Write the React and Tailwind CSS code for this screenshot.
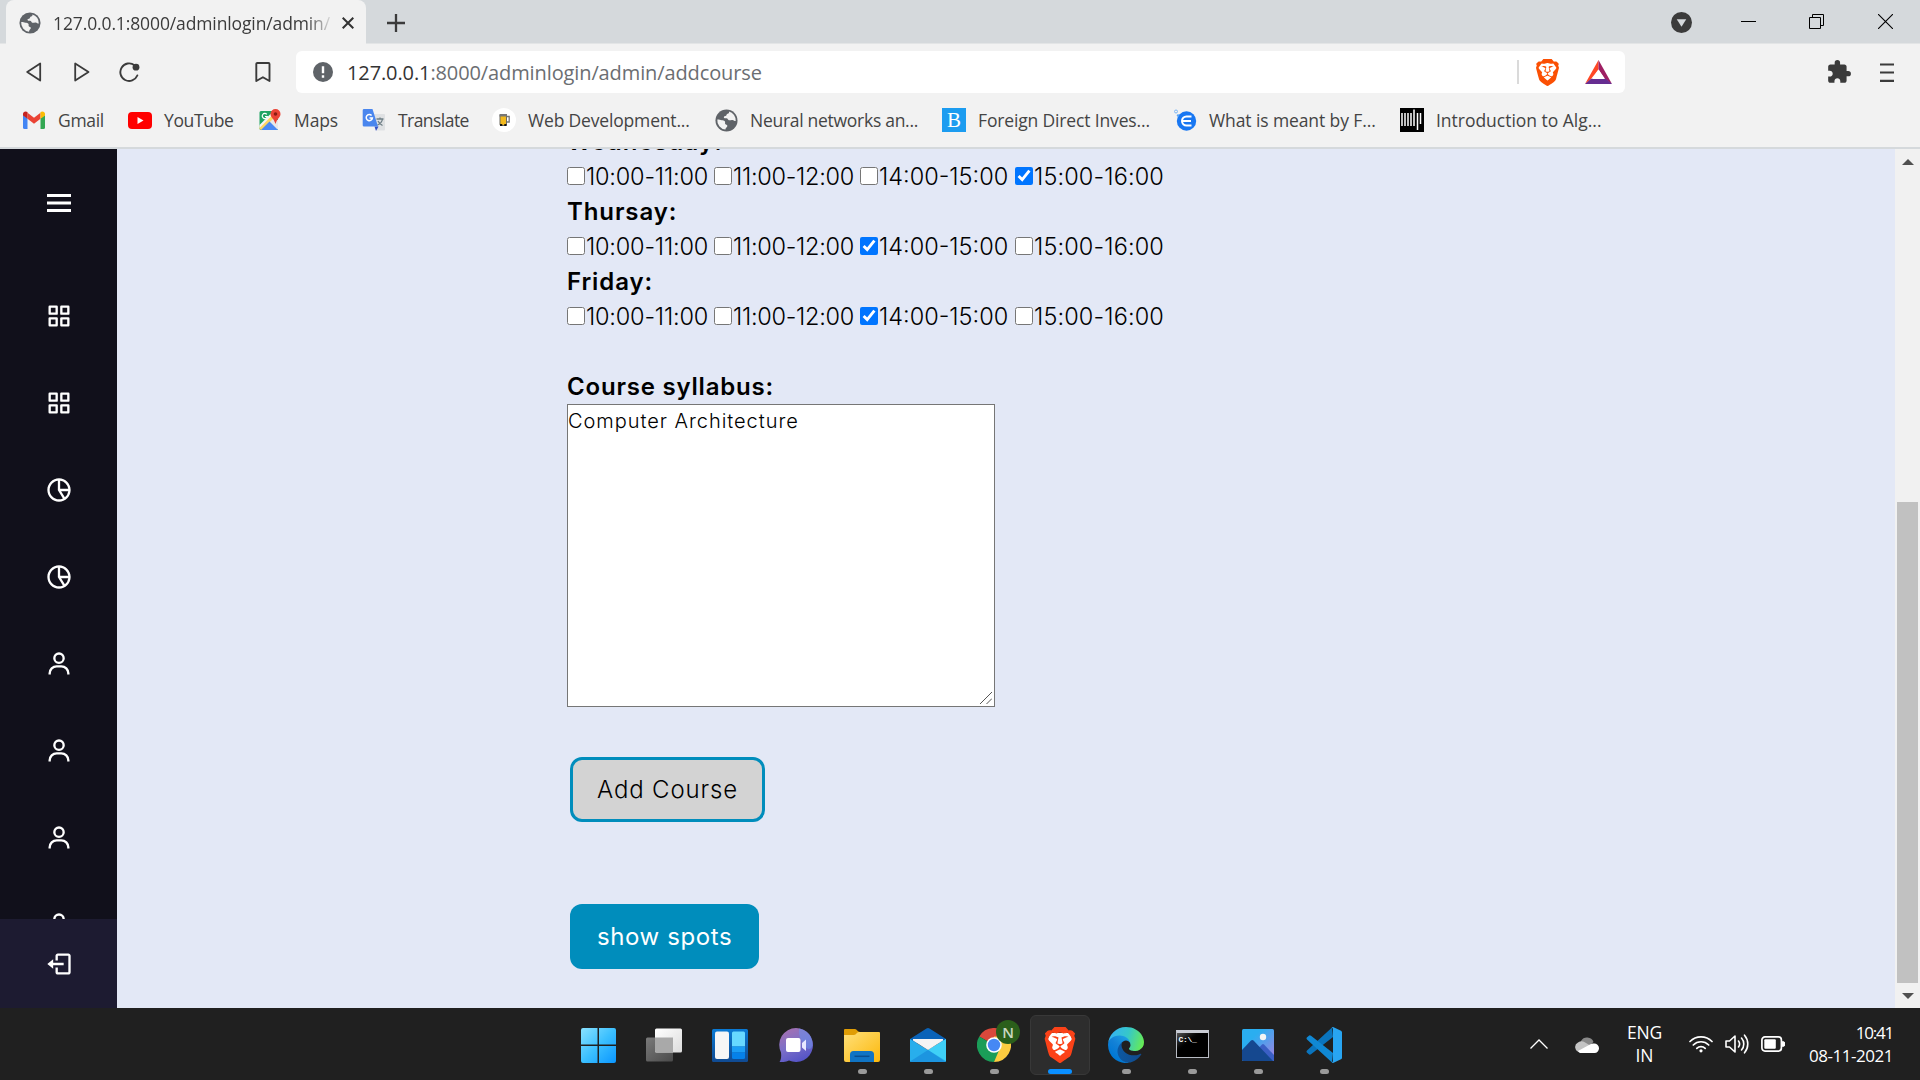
import React from "react";
import { BiMenu, BiGridAlt, BiPieChartAlt2, BiUser, BiLogOut } from "react-icons/bi";
import { SiBrave } from "react-icons/si";
import { MdExtension } from "react-icons/md";

function Globe({ className }) {
  return (
    <svg viewBox="0 0 24 24" className={className}>
      <circle cx="12" cy="12" r="11.5" fill="#5f6368" />
      <path
        d="M14.500 2.600c.6 1.200-.2 2-1.300 2.400-1.200.4-.9 1.300-1.700 2-.8.6-2.300.4-2.300 1.500 0 1.200 1.500 1 2.800 1.100 1.500.1 1.300 1.700 2.500 2.100 1.300.4 2.300-.5 3.700-.2 1.600.4 2.200 1.200 3.400 1.100A9.700 9.700 0 0 0 14.500 2.600zM2.400 11c1.800-.1 3.100.6 4.600.7 1.300.1 2.400 0 3.200 1 .8 1.100-.1 1.900.5 2.900.6.9 2.100.7 2.200 1.900.1 1.500-2 1.800-2 4A9.700 9.700 0 0 1 2.400 11z"
        fill="#f2f2f2"
      />
    </svg>
  );
}

function GmailIcon() {
  return (
    <svg viewBox="0 0 24 18" className="h-[18px] w-6">
      <path d="M1 16.500V4l4.500 3.500V18H2.500A1.500 1.500 0 0 1 1 16.500z" fill="#4285f4" />
      <path d="M23 16.500V4l-4.500 3.500V18h3a1.500 1.500 0 0 0 1.500-1.500z" fill="#34a853" />
      <path d="M5.500 1.800 12 6.700l6.500-4.900v6L12 12.700 5.500 7.800z" fill="#ea4335" />
      <path d="M1 4V3C1 .6 3.600-.4 5.500 1.100v6.700L1 4.400z" fill="#c5221f" />
      <path d="M23 4V3c0-2.400-2.600-3.400-4.500-1.900v6.700L23 4.400z" fill="#fbbc04" />
    </svg>
  );
}

function YouTubeIcon() {
  return (
    <svg viewBox="0 0 24 17" className="h-[17px] w-6">
      <rect width="24" height="17" rx="4" fill="#f00" />
      <path d="M9.500 5v7l6-3.500z" fill="#fff" />
    </svg>
  );
}

function MapsIcon() {
  return (
    <svg viewBox="0 0 24 24" className="size-6">
      <path d="M3 3h17v19H3a1.500 1.500 0 0 1-1.500-1.500v-16A1.500 1.500 0 0 1 3 3z" fill="#1fa463" />
      <path d="M20 12v8.500a1.500 1.500 0 0 1-1.500 1.500l-8-8 4-4z" fill="#e8e8e8" />
      <path d="M1.500 18.500 14 6l3 3L3.500 22.200 1.500 21z" fill="#fdd663" />
      <path d="M1.500 17 13 5.500l1.500 1.500-13 13z" fill="#f5f5f5" />
      <path d="M3 22 11.500 13.500 20 22z" fill="#4a89f3" />
      <path d="M8.800 6.300a2.600 2.600 0 1 0 .6 2.200H7" fill="none" stroke="#fff" strokeWidth="1.200" />
      <path d="M17.500 1a5 5 0 0 1 5 5c0 3.500-3.500 4.500-5 10-1.500-5.500-5-6.500-5-10a5 5 0 0 1 5-5z" fill="#ea4335" />
      <circle cx="17.500" cy="6" r="1.800" fill="#8c1c13" />
    </svg>
  );
}

function TranslateIcon() {
  return (
    <svg viewBox="0 0 24 24" className="size-6">
      <path d="M10 6h12a1 1 0 0 1 1 1v14.500a1 1 0 0 1-1 1h-7z" fill="#dfe1e3" />
      <path d="M14.500 11h7M18 9.500V11m2.500 0c-.5 3-2.500 5-5 6m.5-4c1 2 2.500 3.500 4.500 4.500" stroke="#6f7f86" strokeWidth="1.300" fill="none" />
      <path d="M12.500 18.500h4L14 23z" fill="#3551c4" />
      <path d="M2 1h8.500l5.500 17.500H2a1.300 1.300 0 0 1-1.300-1.300V2.300A1.300 1.300 0 0 1 2 1z" fill="#4a86ee" />
      <path d="M9.600 7.500a3.100 3.100 0 1 0 .8 2.400H7.500" stroke="#fff" strokeWidth="1.500" fill="none" />
    </svg>
  );
}

function BeerIcon() {
  return (
    <svg viewBox="0 0 24 24" className="size-6">
      <circle cx="12" cy="12" r="12" fill="#fff" />
      <path d="M14.500 8.500h2.700v5.500h-2.700" stroke="#777" strokeWidth="1.300" fill="none" />
      <rect x="8" y="6.500" width="6.500" height="11" rx="1" fill="#f2b91d" stroke="#6d6a60" strokeWidth="1" />
      <path d="M7.500 6h7.500v2.500H7.500z" fill="#777" />
      <path d="M8 16h2.300v2H8zM12.300 16h2.300v2h-2.300z" fill="#111" />
    </svg>
  );
}

function BIcon() {
  return (
    <span className="flex size-6 items-center justify-center bg-[#1c9cf0] font-['Liberation_Serif',serif] text-[21px] leading-6 text-white">B</span>
  );
}

function EIcon() {
  return (
    <svg viewBox="0 0 24 24" className="size-6">
      <circle cx="13.500" cy="13" r="9.700" fill="#1877f2" />
      <circle cx="3" cy="3.500" r="1.500" fill="none" stroke="#7db7f5" />
      <circle cx="5" cy="7.500" r="1.200" fill="#58a3f5" />
      <path d="M18.500 8.500h-5a4.500 4.500 0 0 0 0 9h5M9.500 13h8.500" stroke="#fff" strokeWidth="2" fill="none" />
    </svg>
  );
}

function MitIcon() {
  return (
    <svg viewBox="0 0 24 24" className="size-6">
      <path d="M0 0h24v24H0z" fill="#000" />
      <path d="M2 5v13M5 5v13M8 5v13M11 5v13M14 1.500v16.500M17.500 5v17M20.500 5v11" stroke="#fff" strokeWidth="1.500" />
    </svg>
  );
}

const bookmarks = [
  { label: "Gmail", icon: <GmailIcon />, box: "w-[106px]", track: "tracking-[-0.3px]" },
  { label: "YouTube", icon: <YouTubeIcon />, box: "w-[130px]", track: "tracking-[-0.35px]" },
  { label: "Maps", icon: <MapsIcon />, box: "w-[104px]", track: "tracking-[-0.1px]" },
  { label: "Translate", icon: <TranslateIcon />, box: "w-[130px]", track: "tracking-[-0.55px]" },
  { label: "Web Development...", icon: <BeerIcon />, box: "w-[222px]", track: "tracking-[-0.17px]" },
  { label: "Neural networks an...", icon: <Globe className="size-[23px]" />, box: "w-[228px]", track: "tracking-[-0.28px]" },
  { label: "Foreign Direct Inves...", icon: <BIcon />, box: "w-[231px]", track: "tracking-[-0.15px]" },
  { label: "What is meant by F...", icon: <EIcon />, box: "w-[227px]", track: "tracking-[-0.1px]" },
  { label: "Introduction to Alg...", icon: <MitIcon />, box: "w-[220px]", track: "tracking-[-0.02px]" },
];

function TabStrip() {
  return (
    <div className="flex h-11 items-start border-b border-[#e3e5e6] bg-[#d5d9dc]">
      <div className="ml-1.5 flex h-11 w-[360px] items-center rounded-t-lg bg-[#f2f2f2] pt-0.5 pr-3 pb-px pl-[13px]">
        <Globe className="size-[22px]" />
        <div className="ml-3 w-[281px] overflow-hidden mask-r-from-90% mask-r-to-100% text-[17.5px] leading-6 font-medium tracking-[-0.12px] whitespace-nowrap text-[#3b3b3b]">
          127.0.0.1:8000/adminlogin/admin/
        </div>
        <svg viewBox="0 0 12 12" className="ml-2 size-3">
          <path d="M.7.700 11.300 11.300M11.300.7.700 11.300" stroke="#333" strokeWidth="2" />
        </svg>
      </div>
      <svg viewBox="0 0 18 18" className="mt-[14px] ml-[21px] size-[18px]">
        <path d="M9 0v18M0 9h18" stroke="#3b3b3b" strokeWidth="2.300" />
      </svg>
      <div className="mr-[27px] ml-auto flex h-11 items-start">
        <svg viewBox="0 0 22 22" className="mt-3 mr-[49px] size-[21px]">
          <circle cx="11" cy="11" r="11" fill="#3b3b3b" />
          <path d="M6 7.500h10L11 15.500z" fill="#d5d9dc" />
        </svg>
        <svg viewBox="0 0 15 15" className="mt-[14px] mr-[53px] size-[15px]"><path d="M0 7.500h15" stroke="#000" /></svg>
        <svg viewBox="0 0 15 15" className="mt-[14px] mr-[54px] size-[15px]" fill="none" stroke="#000">
          <path d="M3.500 3V.500h11v11H12M.500 3.500h11v11H.500z" />
        </svg>
        <svg viewBox="0 0 15 15" className="mt-[14px] size-[15px]"><path d="M0 0l15 15M15 0 0 15" stroke="#000" strokeWidth="1.100" /></svg>
      </div>
    </div>
  );
}

function Toolbar() {
  return (
    <div className="flex h-[56px] items-center">
      <svg viewBox="0 0 16 20" className="ml-[25.5px] h-5 w-4" fill="none" stroke="#3b3b3b" strokeWidth="1.800" strokeLinejoin="round">
        <path d="M14.200 1.500v17L1.200 10z" />
      </svg>
      <svg viewBox="0 0 16 20" className="ml-8 h-5 w-4" fill="none" stroke="#3b3b3b" strokeWidth="1.800" strokeLinejoin="round">
        <path d="M1.200 1.500v17L14.500 10z" />
      </svg>
      <svg viewBox="0 0 21 20" className="ml-[29.5px] h-5 w-[21px]">
        <path d="M18.300 13.500A8.800 8.800 0 1 1 15.500 3.200" fill="none" stroke="#3b3b3b" strokeWidth="1.900" strokeLinecap="round" />
        <circle cx="17" cy="5.200" r="3.400" fill="#3b3b3b" />
      </svg>
      <svg viewBox="0 0 16 20" className="ml-[115px] h-5 w-4" fill="none" stroke="#3b3b3b" strokeWidth="1.900" strokeLinejoin="round">
        <path d="M1.300 2A1 1 0 0 1 2.300 1h11.200a1 1 0 0 1 1 1v17l-6.600-3.800L1.300 19z" />
      </svg>
      <div className="ml-[25px] flex h-[42px] w-[1329px] items-center rounded-md bg-white">
        <svg viewBox="0 0 20 20" className="ml-[17px] size-5">
          <circle cx="10" cy="10" r="10" fill="#5f6368" />
          <path d="M10 4.300v7M10 13.300v2.400" stroke="#fff" strokeWidth="2.400" />
        </svg>
        <div className="ml-[14px] pt-px text-[20px] leading-[30px] tracking-[-0.11px] whitespace-nowrap text-[#6b6e72]">
          <span className="text-[#333]">127.0.0.1</span>:8000/adminlogin/admin/addcourse
        </div>
        <div className="ml-auto h-6 w-0.5 bg-[#dadada]" />
        <SiBrave className="ml-[15px] h-[27px] w-[27px] text-[#fb5004]" />
        <svg viewBox="0 0 27 24" className="mr-[13px] ml-[24px] h-6 w-[27px]">
          <path d="M13.500 0v9.500L6 19 0 24z" fill="#ff4724" />
          <path d="M13.500 0 27 24l-6.500-4.500-7-10z" fill="#9e1f63" />
          <path d="M0 24 6 18.800h15L27 24z" fill="#662d91" />
          <path d="M13.500 9.300 19.500 19h-12z" fill="#fff" />
        </svg>
      </div>
      <MdExtension className="ml-[201px] size-[26px] text-[#3b3b3b]" />
      <svg viewBox="0 0 14 19" className="ml-[28px] h-[19px] w-[14px]">
        <path d="M0 1.500h14M0 9.500h14M0 17.800h14" stroke="#3b3b3b" strokeWidth="2.200" />
      </svg>
    </div>
  );
}

function BookmarksBar() {
  return (
    <div className="flex h-[49px] items-start border-b-2 border-[#d5d9dc] pl-[22px]">
      {bookmarks.map((b) => (
        <div key={b.label} className={"flex h-10 shrink-0 items-center gap-3 " + b.box}>
          <span className="flex w-6 shrink-0 justify-center">{b.icon}</span>
          <span className={"pb-px text-[17.5px] leading-6 whitespace-nowrap text-[#444] " + b.track}>{b.label}</span>
        </div>
      ))}
    </div>
  );
}

function Sidebar() {
  const items = [BiGridAlt, BiGridAlt, BiPieChartAlt2, BiPieChartAlt2, BiUser, BiUser, BiUser, BiUser];
  return (
    <aside className="flex w-[117px] shrink-0 flex-col bg-[#11101b] text-white">
      <div className="flex h-[108px] shrink-0 items-center justify-center"><BiMenu className="size-9" /></div>
      <nav className="flex min-h-0 flex-1 flex-col overflow-hidden pt-[15px]">
        {items.map((Icon, i) => (
          <div key={i} className="flex h-[87px] shrink-0 items-center justify-center"><Icon className="size-7" /></div>
        ))}
      </nav>
      <div className="flex h-[89px] shrink-0 items-center justify-center bg-[#1d1b31]"><BiLogOut className="size-7" /></div>
    </aside>
  );
}

const slots = [
  { time: "10:00-11:00", box: "w-[147px]", track: "tracking-[-0.2px]" },
  { time: "11:00-12:00", box: "w-[146px]", track: "tracking-[-0.28px]" },
  { time: "14:00-15:00", box: "w-[155px]", track: "" },
  { time: "15:00-16:00", box: "w-[155px]", track: "tracking-[0.13px]" },
];
const days = [
  { name: "Wednesday:", picked: 3, track: "tracking-[1.14px]" },
  { name: "Thursay:", picked: 2, track: "tracking-[0.9px]" },
  { name: "Friday:", picked: 2, track: "tracking-[0.9px]" },
];

function Day({ day }) {
  return (
    <div>
      <div className={"w-fit text-[24px] leading-[35px] font-semibold " + day.track}>{day.name}</div>
      <div className="flex h-[35px] items-center">
        {slots.map((s, i) => (
          <label key={s.time} className={"flex shrink-0 items-center " + s.box}>
            <input type="checkbox" defaultChecked={i === day.picked} className="mb-0.5 size-[18px] shrink-0" />
            <span className={"ml-px text-[23.5px] leading-[35px] font-light whitespace-nowrap " + s.track}>{s.time}</span>
          </label>
        ))}
      </div>
    </div>
  );
}

function CourseForm() {
  return (
    <main className="flex-1 overflow-hidden bg-[#e3e8f6] pl-[450px] font-[Inter,sans-serif] text-black">
      <div className="-mt-[25px]">
        {days.map((d) => (<Day key={d.name} day={d} />))}
      </div>
      <div className="mt-[35px] w-fit text-[24px] leading-[35px] font-semibold tracking-[0.8px]">Course syllabus:</div>
      <div className="relative h-[303px] w-[428px] border border-[#767676] bg-white pt-px">
        <span className="text-[20px] leading-[30px] font-light tracking-[0.96px]">Computer Architecture</span>
        <svg viewBox="0 0 12 12" className="absolute right-0.5 bottom-0.5 size-3"><path d="M0 12 12 0M6.500 12 12 6.500" stroke="#555" /></svg>
      </div>
      <button className="mt-[50px] ml-[3px] flex h-[65px] w-[195px] items-center rounded-[12px] border-3 border-[#008dbc] bg-[#d3d3d3] pl-6 text-[24px] font-light tracking-[0.85px]">
        Add Course
      </button>
      <button className="mt-[82px] ml-[3px] flex h-[65px] w-[189px] items-center rounded-[12px] bg-[#008dbc] pl-[27px] text-[24px] tracking-[0.6px] text-white">
        show spots
      </button>
    </main>
  );
}

function Scrollbar() {
  return (
    <div className="flex w-[25px] shrink-0 flex-col items-center bg-[#f1f1f1]">
      <svg viewBox="0 0 12 6" className="mt-[10px] h-1.5 w-3"><path d="M0 6 6 0l6 6z" fill="#505050" /></svg>
      <div className="mt-[337px] h-[481px] w-[21px] bg-[#c1c1c1]" />
      <svg viewBox="0 0 12 6" className="mt-[10px] h-1.5 w-3"><path d="M0 0 6 6l6-6z" fill="#505050" /></svg>
    </div>
  );
}

function StartIcon() {
  return (
    <svg viewBox="0 0 35 35" className="size-[35px]">
      <defs><linearGradient id="st" x1="0" y1="0" x2="1" y2="1"><stop offset="0" stopColor="#8ae2ff" /><stop offset=".5" stopColor="#3cc0ff" /><stop offset="1" stopColor="#0a96ff" /></linearGradient></defs>
      <path d="M2 0h14.500v16.500H0V2a2 2 0 0 1 2-2zM18 0h15a2 2 0 0 1 2 2v14.500H18zM0 18h16.500v17H2a2 2 0 0 1-2-2zM18 18h17v15a2 2 0 0 1-2 2H18z" fill="url(#st)" />
    </svg>
  );
}

function TaskViewIcon() {
  return (
    <svg viewBox="0 0 36 34" className="h-[34px] w-9">
      <defs>
        <linearGradient id="tv" x1="0" y1="0" x2="1" y2="1"><stop offset="0" stopColor="#fff" /><stop offset="1" stopColor="#dcdcdc" /></linearGradient>
        <linearGradient id="tw" x1="0" y1="0" x2="1" y2="1"><stop offset="0" stopColor="#7a7a7a" /><stop offset="1" stopColor="#4a4a4a" /></linearGradient>
      </defs>
      <rect x="0" y="9.500" width="27" height="24" rx="1.500" fill="url(#tw)" />
      <rect x="9" y=".5" width="27" height="24" rx="1.500" fill="url(#tv)" />
      <path d="M9 9.500h18v15H10.500A1.500 1.500 0 0 1 9 23z" fill="#a9a9a9" />
    </svg>
  );
}

function WidgetsIcon() {
  return (
    <svg viewBox="0 0 36 33" className="h-[33px] w-9">
      <defs><linearGradient id="wg" x1="0" y1="0" x2="0" y2="1"><stop offset="0" stopColor="#0a7ad4" /><stop offset="1" stopColor="#104a92" /></linearGradient></defs>
      <rect width="36" height="33" rx="1.500" fill="url(#wg)" />
      <rect x="3" y="2.500" width="14" height="27.500" rx="2" fill="#f6f6f6" />
      <path d="M20 4a1.500 1.500 0 0 1 1.500-1.500h10A1.500 1.500 0 0 1 33 4v13.500H20z" fill="#67d8ff" />
      <path d="M20 17.500h13v6H20z" fill="#1b9df5" />
      <path d="M20 23.500h13v5a1.500 1.500 0 0 1-1.500 1.500h-10a1.500 1.500 0 0 1-1.500-1.500z" fill="#0581ea" />
    </svg>
  );
}

function ChatIcon() {
  return (
    <svg viewBox="0 0 34 34" className="size-[34px]">
      <defs><linearGradient id="ch" x1=".2" y1=".1" x2=".6" y2="1"><stop offset="0" stopColor="#a070b4" /><stop offset=".45" stopColor="#7d70c8" /><stop offset="1" stopColor="#5453c6" /></linearGradient></defs>
      <path d="M17 0a17 17 0 1 1-7 32.500c-3 1.500-6.500 1.800-9.500 1.500 1.500-2 2-5 1.500-9.500A17 17 0 0 1 17 0z" fill="url(#ch)" />
      <path d="M20 .5c9 1 14 9 13.500 17-2 6-6 3-8 0-3-5-6-8-5.500-17z" fill="#6e8de6" opacity=".6" />
      <rect x="7" y="10" width="14.500" height="14" rx="2" fill="#fff" />
      <path d="M23 15l4-3.500v11.500l-4-3.500z" fill="#e8e8ff" />
    </svg>
  );
}

function FolderIcon() {
  return (
    <svg viewBox="0 0 36 33" className="h-[33px] w-9">
      <defs><linearGradient id="fo" x1="0" y1="0" x2="1" y2="1"><stop offset="0" stopColor="#ffe07a" /><stop offset="1" stopColor="#fcb80b" /></linearGradient></defs>
      <path d="M0 1a1 1 0 0 1 1-1h10c2 0 2.500 3 5 3v5H0z" fill="#e09d05" />
      <path d="M0 6h10c2.500 0 2.500-3 5-3h20a1 1 0 0 1 1 1v27a2 2 0 0 1-2 2H2a2 2 0 0 1-2-2z" fill="url(#fo)" />
      <path d="M6 33v-7.500A3.500 3.500 0 0 1 9.500 22h17a3.500 3.500 0 0 1 3.500 3.500V33z" fill="#1074c4" />
      <path d="M10.500 27.300h15" stroke="#0a4e8f" strokeWidth="1.500" />
    </svg>
  );
}

function MailIcon() {
  return (
    <svg viewBox="0 0 36 34" className="h-[34px] w-9">
      <path d="M0 11 16.500.6a2.500 2.500 0 0 1 3 0L36 11v4H0z" fill="#0a63b8" />
      <path d="M0 11l18 11L36 11v22a1 1 0 0 1-1 1H1a1 1 0 0 1-1-1z" fill="#28aeec" />
      <path d="M36 11v22L18 22z" fill="#3fd0f7" />
      <path d="M0 33.500 18 22l18 12H1z" fill="#1c95e0" />
      <path d="M3 11h30v1.500L18 22 3 12.500z" fill="#f4f4f4" />
    </svg>
  );
}

function ChromeIcon() {
  return (
    <span className="relative flex">
      <svg viewBox="0 0 48 48" className="size-[34px]">
        <path d="M24 24 3.200 12A24 24 0 0 1 44.800 12z" fill="#d9483b" />
        <path d="M24 24 3.200 12A24 24 0 0 0 24 48l10.400-18z" fill="#1a9d58" />
        <path d="M24 24h10.400L24 48A24 24 0 0 0 44.800 12H24z" fill="#fecd40" />
        <circle cx="24" cy="24" r="11" fill="#fff" />
        <circle cx="24" cy="24" r="8.800" fill="#4688f4" />
      </svg>
      <span className="absolute -top-2 left-[19px] flex size-6 items-center justify-center rounded-full bg-[#2b5f1b] text-[15px] font-semibold text-[#c9d8c2]">N</span>
    </span>
  );
}

function BraveTile() {
  return (
    <span className="relative flex items-center justify-center">
      <svg viewBox="0 0 30 36" className="h-9 w-[30px]"><path d="M5 6h20l2 6-4 16-8 6-8-6L3 12z" fill="#fff" /></svg>
      <SiBrave className="absolute h-9 w-9 text-[#fb4218]" />
    </span>
  );
}

function EdgeIcon() {
  return (
    <svg viewBox="0 0 256 256" className="size-9">
      <defs>
        <linearGradient id="e1" x1="60" y1="180" x2="241" y2="180" gradientUnits="userSpaceOnUse"><stop offset="0" stopColor="#0c59a4" /><stop offset="1" stopColor="#114a8b" /></linearGradient>
        <linearGradient id="e2" x1="150" y1="100" x2="46" y2="215" gradientUnits="userSpaceOnUse"><stop offset="0" stopColor="#1b9de2" /><stop offset=".5" stopColor="#1380d6" /><stop offset="1" stopColor="#0078d4" /></linearGradient>
        <linearGradient id="e3" x1="20" y1="60" x2="250" y2="130" gradientUnits="userSpaceOnUse"><stop offset="0" stopColor="#35b4f1" /><stop offset=".5" stopColor="#36c7c9" /><stop offset="1" stopColor="#66eb56" /></linearGradient>
      </defs>
      <g transform="translate(-4.630 -4.920)">
        <path d="M235.680 195.460a93.730 93.730 0 0 1-10.540 4.710 101.870 101.870 0 0 1-35.900 6.460c-47.320 0-88.540-32.550-88.540-74.320A31.480 31.480 0 0 1 117.130 105c-42.800 1.800-53.800 46.400-53.800 72.530 0 73.880 68.090 81.370 82.760 81.370 7.910 0 19.840-2.300 27-4.560l1.310-.44A128.340 128.340 0 0 0 241 201.090a4 4 0 0 0-5.340-5.630Z" fill="url(#e1)" />
        <path d="M110.340 246.340A79.200 79.200 0 0 1 87.600 225a80.720 80.720 0 0 1 29.530-120c3.120-1.470 8.450-4.130 15.540-4a32.350 32.350 0 0 1 25.690 13 31.880 31.880 0 0 1 6.360 18.660c0-.21 24.460-79.600-80-79.600-43.900 0-80 41.660-80 78.210a130.150 130.150 0 0 0 12.110 56 128 128 0 0 0 156.380 67.110 75.550 75.550 0 0 1-62.780-8Z" fill="url(#e2)" />
        <path d="M156.940 153.780c-.81 1.050-3.300 2.500-3.300 5.660 0 2.610 1.700 5.120 4.720 7.230 14.380 10 41.490 8.680 41.560 8.680a59.560 59.560 0 0 0 30.270-8.350A61.380 61.380 0 0 0 260.620 114.070c.26-22.410-8-37.310-11.340-43.910C228.090 28.760 182.350 4.920 132.610 4.920a128 128 0 0 0-128 126.200c.48-36.540 36.800-66.050 80-66.050 3.500 0 23.460.34 42 10.070 16.340 8.580 24.900 18.940 30.850 29.210 6.180 10.670 7.280 24.150 7.280 29.520s-2.740 13.330-7.800 19.910Z" fill="url(#e3)" />
      </g>
    </svg>
  );
}

function TerminalIcon() {
  return (
    <span className="mb-0.5 flex h-7 w-[33px] flex-col border border-t-[3px] border-[#b9bcc4] border-t-[#c9ccd4] bg-black bg-linear-to-br from-[#5a5a5a] from-0% via-black via-45% to-black font-['Liberation_Mono',monospace] text-[8px] leading-[9px] font-bold text-white">
      <span className="pt-0.5 pl-0.5 tracking-[-0.3px] whitespace-nowrap">C:\_</span>
    </span>
  );
}

function PhotosIcon() {
  return (
    <svg viewBox="0 0 32 32" className="size-8">
      <defs><linearGradient id="ph" x1="0" y1="0" x2="1" y2="1"><stop offset=".3" stopColor="#2aaef0" /><stop offset="1" stopColor="#a77fe0" /></linearGradient></defs>
      <rect width="32" height="32" rx="1.500" fill="url(#ph)" />
      <path d="M15 21l5-5.500a1.500 1.500 0 0 1 2 0l10 10.500v6H15z" fill="#3b5fc4" />
      <path d="M0 21l9-9.500a1.800 1.800 0 0 1 2.500 0L31 32H1.500A1.500 1.500 0 0 1 0 30.500z" fill="#15488f" />
      <circle cx="21" cy="8" r="3.200" fill="#f4f4f4" />
    </svg>
  );
}

function VSCodeIcon() {
  return (
    <svg viewBox="0 0 36 36" className="size-9">
      <path d="M1 23.500 26 .5l1 9.500L5 27.200a1.800 1.800 0 0 1-2.400-.1L.8 25.400a1.400 1.400 0 0 1 .2-1.900z" fill="#0a74bd" />
      <path d="M1 12.500 26 35.500l1-9.500L5 8.800a1.800 1.800 0 0 0-2.400.1L.8 10.600a1.400 1.400 0 0 0 .2 1.900z" fill="#1088d4" />
      <path d="M26 35.700c-.6-.2 1-.5 1-2V2.300c0-1.500-1.600-1.800-1-2L27 0l8 3.700a2 2 0 0 1 1 1.800v25a2 2 0 0 1-1 1.800L27 36z" fill="#28a5f2" />
    </svg>
  );
}

const apps = [
  { icon: <StartIcon /> },
  { icon: <TaskViewIcon /> },
  { icon: <WidgetsIcon /> },
  { icon: <ChatIcon /> },
  { icon: <FolderIcon />, dot: true },
  { icon: <MailIcon />, dot: true },
  { icon: <ChromeIcon />, dot: true },
  { icon: <BraveTile />, active: true },
  { icon: <EdgeIcon />, dot: true },
  { icon: <TerminalIcon />, dot: true },
  { icon: <PhotosIcon />, dot: true },
  { icon: <VSCodeIcon />, dot: true },
];

function Taskbar() {
  return (
    <footer className="flex h-[72px] shrink-0 bg-[#202020] pl-[565px] text-white">
      {apps.map((a, i) => (
        <div key={i} className="flex h-[72px] w-[66px] shrink-0 justify-center pt-[7px]">
          <div className={"flex h-[60px] w-[60px] flex-col items-center rounded-md " + (a.active ? "border border-[#383838] bg-[#2d2d2d]" : "border border-transparent")}>
            <div className="flex h-[58px] shrink-0 items-center">{a.icon}</div>
            {a.dot && <span className="-mt-[5px] h-[5px] w-[9px] shrink-0 rounded-full bg-[#9a9a9a]" />}
            {a.active && <span className="-mt-[5px] h-[5px] w-6 shrink-0 rounded-full bg-[#0a8fff]" />}
          </div>
        </div>
      ))}
      <div className="ml-auto flex items-center pr-[27px] text-[17.5px]">
        <svg viewBox="0 0 18 10" className="mr-[27px] h-[10px] w-[18px]"><path d="M.5 9.500 9 1l8.500 8.500" fill="none" stroke="#fff" strokeWidth="1.300" /></svg>
        <svg viewBox="0 0 24 17" className="mr-[28px] h-[17px] w-6">
          <path d="M6 5a7 7 0 0 1 12.500 1L14 10H5z" fill="#8a8a8a" />
          <path d="M5 16a5 5 0 0 1-2-9.500 7 7 0 0 1 8 .5l5 3-8 6z" fill="#c4c4c4" />
          <path d="M3 15l11-6a6 6 0 0 1 5-1.500A4.600 4.600 0 0 1 19.500 17H5a5 5 0 0 1-2-2z" fill="#fff" />
        </svg>
        <div className="mr-[27px] flex w-[35px] flex-col items-center leading-[23px]">
          <span className="tracking-[-0.2px]">ENG</span>
          <span>IN</span>
        </div>
        <svg viewBox="0 0 24 18" className="mr-3 h-[18px] w-6" fill="none" stroke="#fff" strokeWidth="1.700" strokeLinecap="round">
          <path d="M1 6.500a15.500 15.500 0 0 1 22 0M4.300 10a10.800 10.800 0 0 1 15.400 0M7.800 13.300a6 6 0 0 1 8.400 0" />
          <circle cx="12" cy="15.800" r="1.600" fill="#fff" stroke="none" />
        </svg>
        <svg viewBox="0 0 24 20" className="mr-3 h-5 w-6" fill="none" stroke="#fff" strokeWidth="1.600" strokeLinecap="round" strokeLinejoin="round">
          <path d="M1 7v6h3.500l5.500 5V2L4.500 7zM13.500 7a5 5 0 0 1 0 6M16.500 4a9 9 0 0 1 0 12M19.500 1.200a13.500 13.500 0 0 1 0 17.600" />
        </svg>
        <svg viewBox="0 0 24 16" className="mr-[24px] h-4 w-6">
          <rect x=".9" y=".9" width="19.500" height="14.200" rx="3" fill="none" stroke="#fff" strokeWidth="1.700" />
          <rect x="3.300" y="3.300" width="11.500" height="9.400" rx="1" fill="#fff" />
          <path d="M21.500 5.500a2.500 2.500 0 0 1 0 5z" fill="#fff" stroke="#fff" />
        </svg>
        <div className="flex w-[84px] flex-col items-end text-[17px] leading-[23px] whitespace-nowrap">
          <span className="tracking-[-1.2px]">10:41</span>
          <span className="tracking-[-0.47px]">08-11-2021</span>
        </div>
      </div>
    </footer>
  );
}

export default function App() {
  return (
    <div className="flex h-[1080px] w-[1920px] flex-col overflow-hidden bg-[#f2f2f2] font-['Open_Sans','Noto_Sans',sans-serif]">
      <header className="shrink-0">
        <TabStrip />
        <Toolbar />
        <BookmarksBar />
      </header>
      <div className="flex min-h-0 flex-1">
        <Sidebar />
        <CourseForm />
        <Scrollbar />
      </div>
      <Taskbar />
    </div>
  );
}
